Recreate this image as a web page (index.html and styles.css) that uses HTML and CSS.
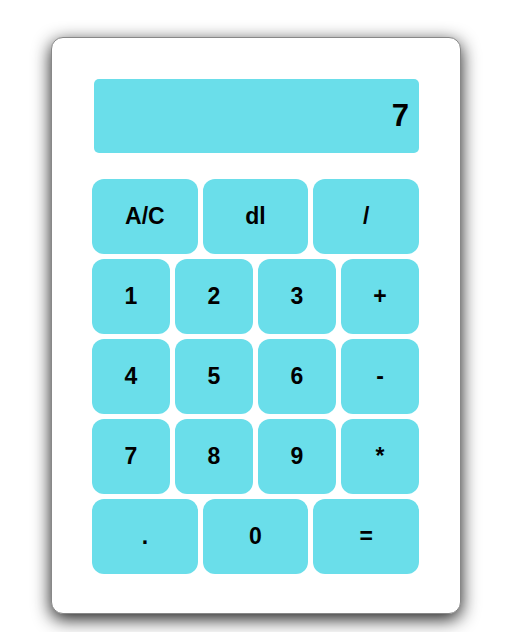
FILE: index.html
```html
<!DOCTYPE html>
<html>
<head>
<meta charset="utf-8">
<link rel="stylesheet" href="styles.css">
</head>
<body>
<div class="calc">
  <div class="display">7</div>
  <div class="keys">
    <div class="key wide">A/C</div>
    <div class="key wide">dl</div>
    <div class="key wide">/</div>
    <div class="key">1</div>
    <div class="key">2</div>
    <div class="key">3</div>
    <div class="key">+</div>
    <div class="key">4</div>
    <div class="key">5</div>
    <div class="key">6</div>
    <div class="key">-</div>
    <div class="key">7</div>
    <div class="key">8</div>
    <div class="key">9</div>
    <div class="key">*</div>
    <div class="key wide">.</div>
    <div class="key wide">0</div>
    <div class="key wide">=</div>
  </div>
</div>
</body>
</html>
```
FILE: styles.css
```css
html, body {
  margin: 0;
  padding: 0;
  background: #fff;
  font-family: "Liberation Sans", Arial, sans-serif;
}
body {
  padding: 37px 0 40px 51px;
}
.calc {
  box-sizing: border-box;
  width: 410px;
  height: 577px;
  padding: 42px 42px 40px 41px;
  background: #fff;
  border-radius: 12px;
  border: 1px solid #888;
  box-shadow: 0 5px 18px rgba(0, 0, 0, 0.9);
}
.display {
  box-sizing: border-box;
  width: 325px;
  height: 74px;
  margin: -1px 0 26px 1px;
  padding-right: 10px;
  background: #6adeea;
  border-radius: 5px;
  display: flex;
  align-items: center;
  justify-content: flex-end;
  font-size: 31px;
  font-weight: bold;
  color: #000;
}
.keys {
  display: grid;
  grid-template-columns: repeat(12, 1fr);
  grid-auto-rows: 75px;
  gap: 5px;
  width: 327px;
  margin-left: -1px;
}
.key {
  grid-column: span 3;
  background: #6adeea;
  border-radius: 12px;
  display: flex;
  align-items: center;
  justify-content: center;
  font-size: 23px;
  font-weight: bold;
  color: #000;
}
.key.wide {
  grid-column: span 4;
}
```
